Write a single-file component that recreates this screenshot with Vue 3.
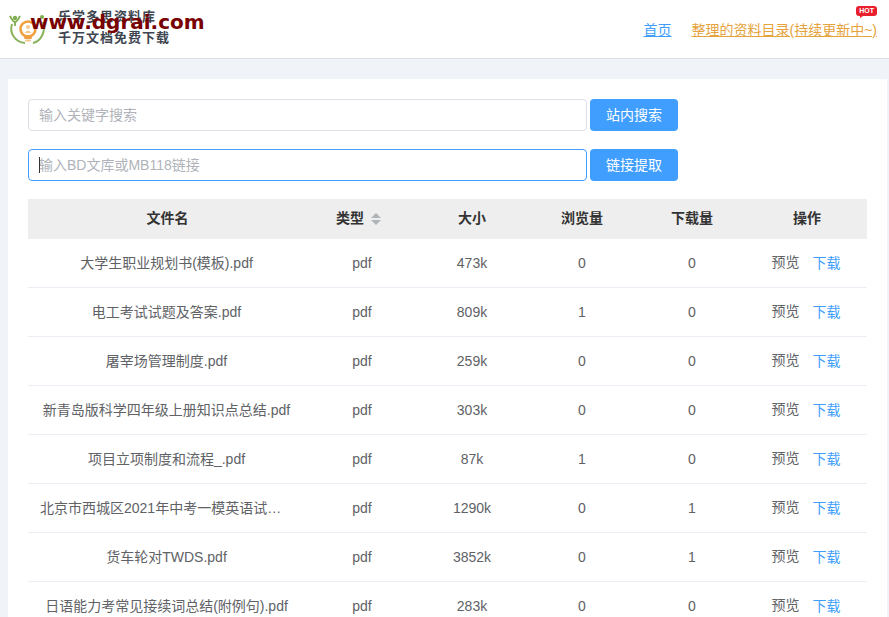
<template>
  <div class="page">
    <header class="top-bar">
      <div class="logo">
        <svg class="logo-icon" width="42" height="34" viewBox="0 0 42 34">
          <!-- grüne Bögen mit den zwei Figuren, Glühbirne in der Mitte -->
          <path d="M4 12 C1 21 7 30 17 31 M35 10 C38 20 33 29 25 31" fill="none" stroke="#8ab25a" stroke-width="2" />
          <circle cx="7" cy="6" r="2.2" fill="#7fae4e" />
          <path d="M2 4 Q5 10 7 10 Q9 10 12 4 M7 9 V14" fill="none" stroke="#7fae4e" stroke-width="1.8" />
          <circle cx="34" cy="5" r="2" fill="#7fae4e" />
          <circle cx="20" cy="17" r="7.5" fill="#fff" stroke="#f0a040" stroke-width="2.6" />
          <path d="M15.5 23 H24.5 L23.5 27 H16.5 Z" fill="#f0a040" />
          <rect x="17" y="27.5" width="6" height="2" rx="1" fill="#f6c88c" />
          <circle cx="20" cy="15" r="2" fill="#f6c88c" />
          <path d="M16.5 21 Q20 16 23.5 21 Z" fill="#f6c88c" />
        </svg>
        <div class="logo-text">
          <span>乐学多思资料库</span>
          <span>千万文档免费下载</span>
        </div>
        <span class="watermark">www.dgrai.com</span>
      </div>

      <nav class="top-nav">
        <a class="nav-home">首页</a>
        <a class="nav-catalog">
          整理的资料目录(持续更新中~)
          <span class="hot">HOT</span>
        </a>
      </nav>
    </header>

    <main class="content">
      <div class="search-row">
        <div class="fake-input">
          <span class="placeholder">输入关键字搜索</span>
        </div>
        <button class="action-button">站内搜索</button>
      </div>

      <div class="search-row">
        <div class="fake-input is-focus">
          <i class="caret"></i>
          <span class="placeholder">输入BD文库或MB118链接</span>
        </div>
        <button class="action-button">链接提取</button>
      </div>

      <table class="file-table">
        <colgroup>
          <col class="col-name" />
          <col class="col-num" />
          <col class="col-num" />
          <col class="col-num" />
          <col class="col-num" />
          <col />
        </colgroup>
        <thead>
          <tr>
            <th>文件名</th>
            <th>
              类型
              <span class="sort-icon">
                <i class="sort-up"></i>
                <i class="sort-down"></i>
              </span>
            </th>
            <th>大小</th>
            <th>浏览量</th>
            <th>下载量</th>
            <th>操作</th>
          </tr>
        </thead>
        <tbody>
          <tr v-for="file in files" :key="file.name">
            <td><div class="file-name">{{ file.name }}</div></td>
            <td>pdf</td>
            <td>{{ file.size }}</td>
            <td>{{ file.views }}</td>
            <td>{{ file.downloads }}</td>
            <td>
              <a class="op-preview">预览</a>
              <a class="op-download">下载</a>
            </td>
          </tr>
        </tbody>
      </table>
    </main>
  </div>
</template>

<script setup>
const files = [
  { name: '大学生职业规划书(模板).pdf', size: '473k', views: 0, downloads: 0 },
  { name: '电工考试试题及答案.pdf', size: '809k', views: 1, downloads: 0 },
  { name: '屠宰场管理制度.pdf', size: '259k', views: 0, downloads: 0 },
  { name: '新青岛版科学四年级上册知识点总结.pdf', size: '303k', views: 0, downloads: 0 },
  { name: '项目立项制度和流程_.pdf', size: '87k', views: 1, downloads: 0 },
  { name: '北京市西城区2021年中考一模英语试卷及答案.pdf', size: '1290k', views: 0, downloads: 1 },
  { name: '货车轮对TWDS.pdf', size: '3852k', views: 0, downloads: 1 },
  { name: '日语能力考常见接续词总结(附例句).pdf', size: '283k', views: 0, downloads: 0 },
]
</script>

<style>
html,
body {
  margin: 0;
  height: 100%;
  overflow: hidden;
}
</style>

<style scoped>
.page {
  height: 617px;
  overflow: hidden;
  background: #f0f3f7;
  font-family: "Liberation Sans", "Noto Sans CJK SC", sans-serif;
  font-size: 14px;
  color: #606266;
}

.top-bar {
  height: 58px;
  padding: 0 12px 0 8px;

  border-bottom: 1px solid #dcdfe6;
  background: white;

  display: flex;
  align-items: center;
  justify-content: space-between;
}

.logo {
  position: relative;
  display: flex;
  align-items: center;
  gap: 8px;
}

.logo-text {
  display: flex;
  flex-direction: column;
  margin-bottom: 6px;

  color: #3d4650;
  font-family: "Noto Sans CJK SC", sans-serif;
  font-size: 13px;
  font-weight: 700;
  line-height: 21px;
  letter-spacing: 1px;
}

.watermark {
  position: absolute;
  left: 22px;
  top: 5px;

  color: #780000;
  font-family: "DejaVu Sans", sans-serif;
  font-size: 20px;
  font-weight: 700;
  white-space: nowrap;
}

.top-nav {
  display: flex;
  gap: 20px;
  font-size: 14px;
}

.top-nav a {
  text-decoration: underline;
}

.nav-home {
  color: #409eff;
}

.nav-catalog {
  position: relative;
  color: #e6a23c;
}

.hot {
  position: absolute;
  right: 0;
  top: -13px;
  padding: 0 3px;

  border-radius: 3px;
  background: #e8202e;
  color: white;

  font-size: 7px;
  font-weight: 700;
  line-height: 10px;
}

.hot::after {
  content: "";
  position: absolute;
  left: 4px;
  bottom: -2px;
  border-top: 2px solid #e8202e;
  border-right: 3px solid transparent;
}

.content {
  margin: 20px 2px 0 8px;
  padding: 20px 20px 0;
  background: white;
}

.search-row {
  display: flex;
  gap: 3px;
  margin-bottom: 18px;
}

.fake-input {
  position: relative;
  box-sizing: border-box;
  width: 559px;
  height: 32px;
  padding: 0 10px 2px;

  border: 1px solid #dcdfe6;
  border-radius: 4px;

  display: flex;
  align-items: center;
}

.fake-input.is-focus {
  border-color: #409eff;
}

.placeholder {
  color: #b0b3ba;
}

.caret {
  position: absolute;
  left: 10px;
  top: 7px;
  width: 1px;
  height: 16px;
  background: #333;
}

.action-button {
  width: 88px;
  height: 32px;
  padding: 0 0 2px;

  border: none;
  border-radius: 4px;

  background: #409eff;
  color: white;

  font-family: inherit;
  font-size: 14px;
}

.file-table {
  width: 100%;
  border-collapse: collapse;
  table-layout: fixed;
  text-align: center;
}

.col-name {
  width: 279px;
}

.col-num {
  width: 110px;
}

.file-table th {
  box-sizing: border-box;
  height: 40px;
  padding: 0 0 4px;

  background: #eeeeee;
  color: #333;

  font-weight: 700;
}

.file-table td {
  height: 48px;
  padding: 0;
  border-bottom: 1px solid #ebeef5;
}

.file-name {
  padding: 0 14px 2px 12px;
  overflow: hidden;
  text-overflow: ellipsis;
  white-space: nowrap;
}

.sort-icon {
  display: inline-flex;
  flex-direction: column;
  gap: 2px;
  margin: 0 7px 0 3px;
  vertical-align: middle;
}

.sort-up,
.sort-down {
  display: block;
  border-left: 5px solid transparent;
  border-right: 5px solid transparent;
}

.sort-up {
  border-bottom: 5px solid #b0b3ba;
}

.sort-down {
  border-top: 5px solid #b0b3ba;
}

.op-preview,
.op-download {
  display: inline-block;
  padding-bottom: 4px;
}

.op-preview {
  margin-right: 13px;
  vertical-align: 1px;
  color: #606266;
}

.op-download {
  margin-right: 2px;
  color: #409eff;
}
</style>
